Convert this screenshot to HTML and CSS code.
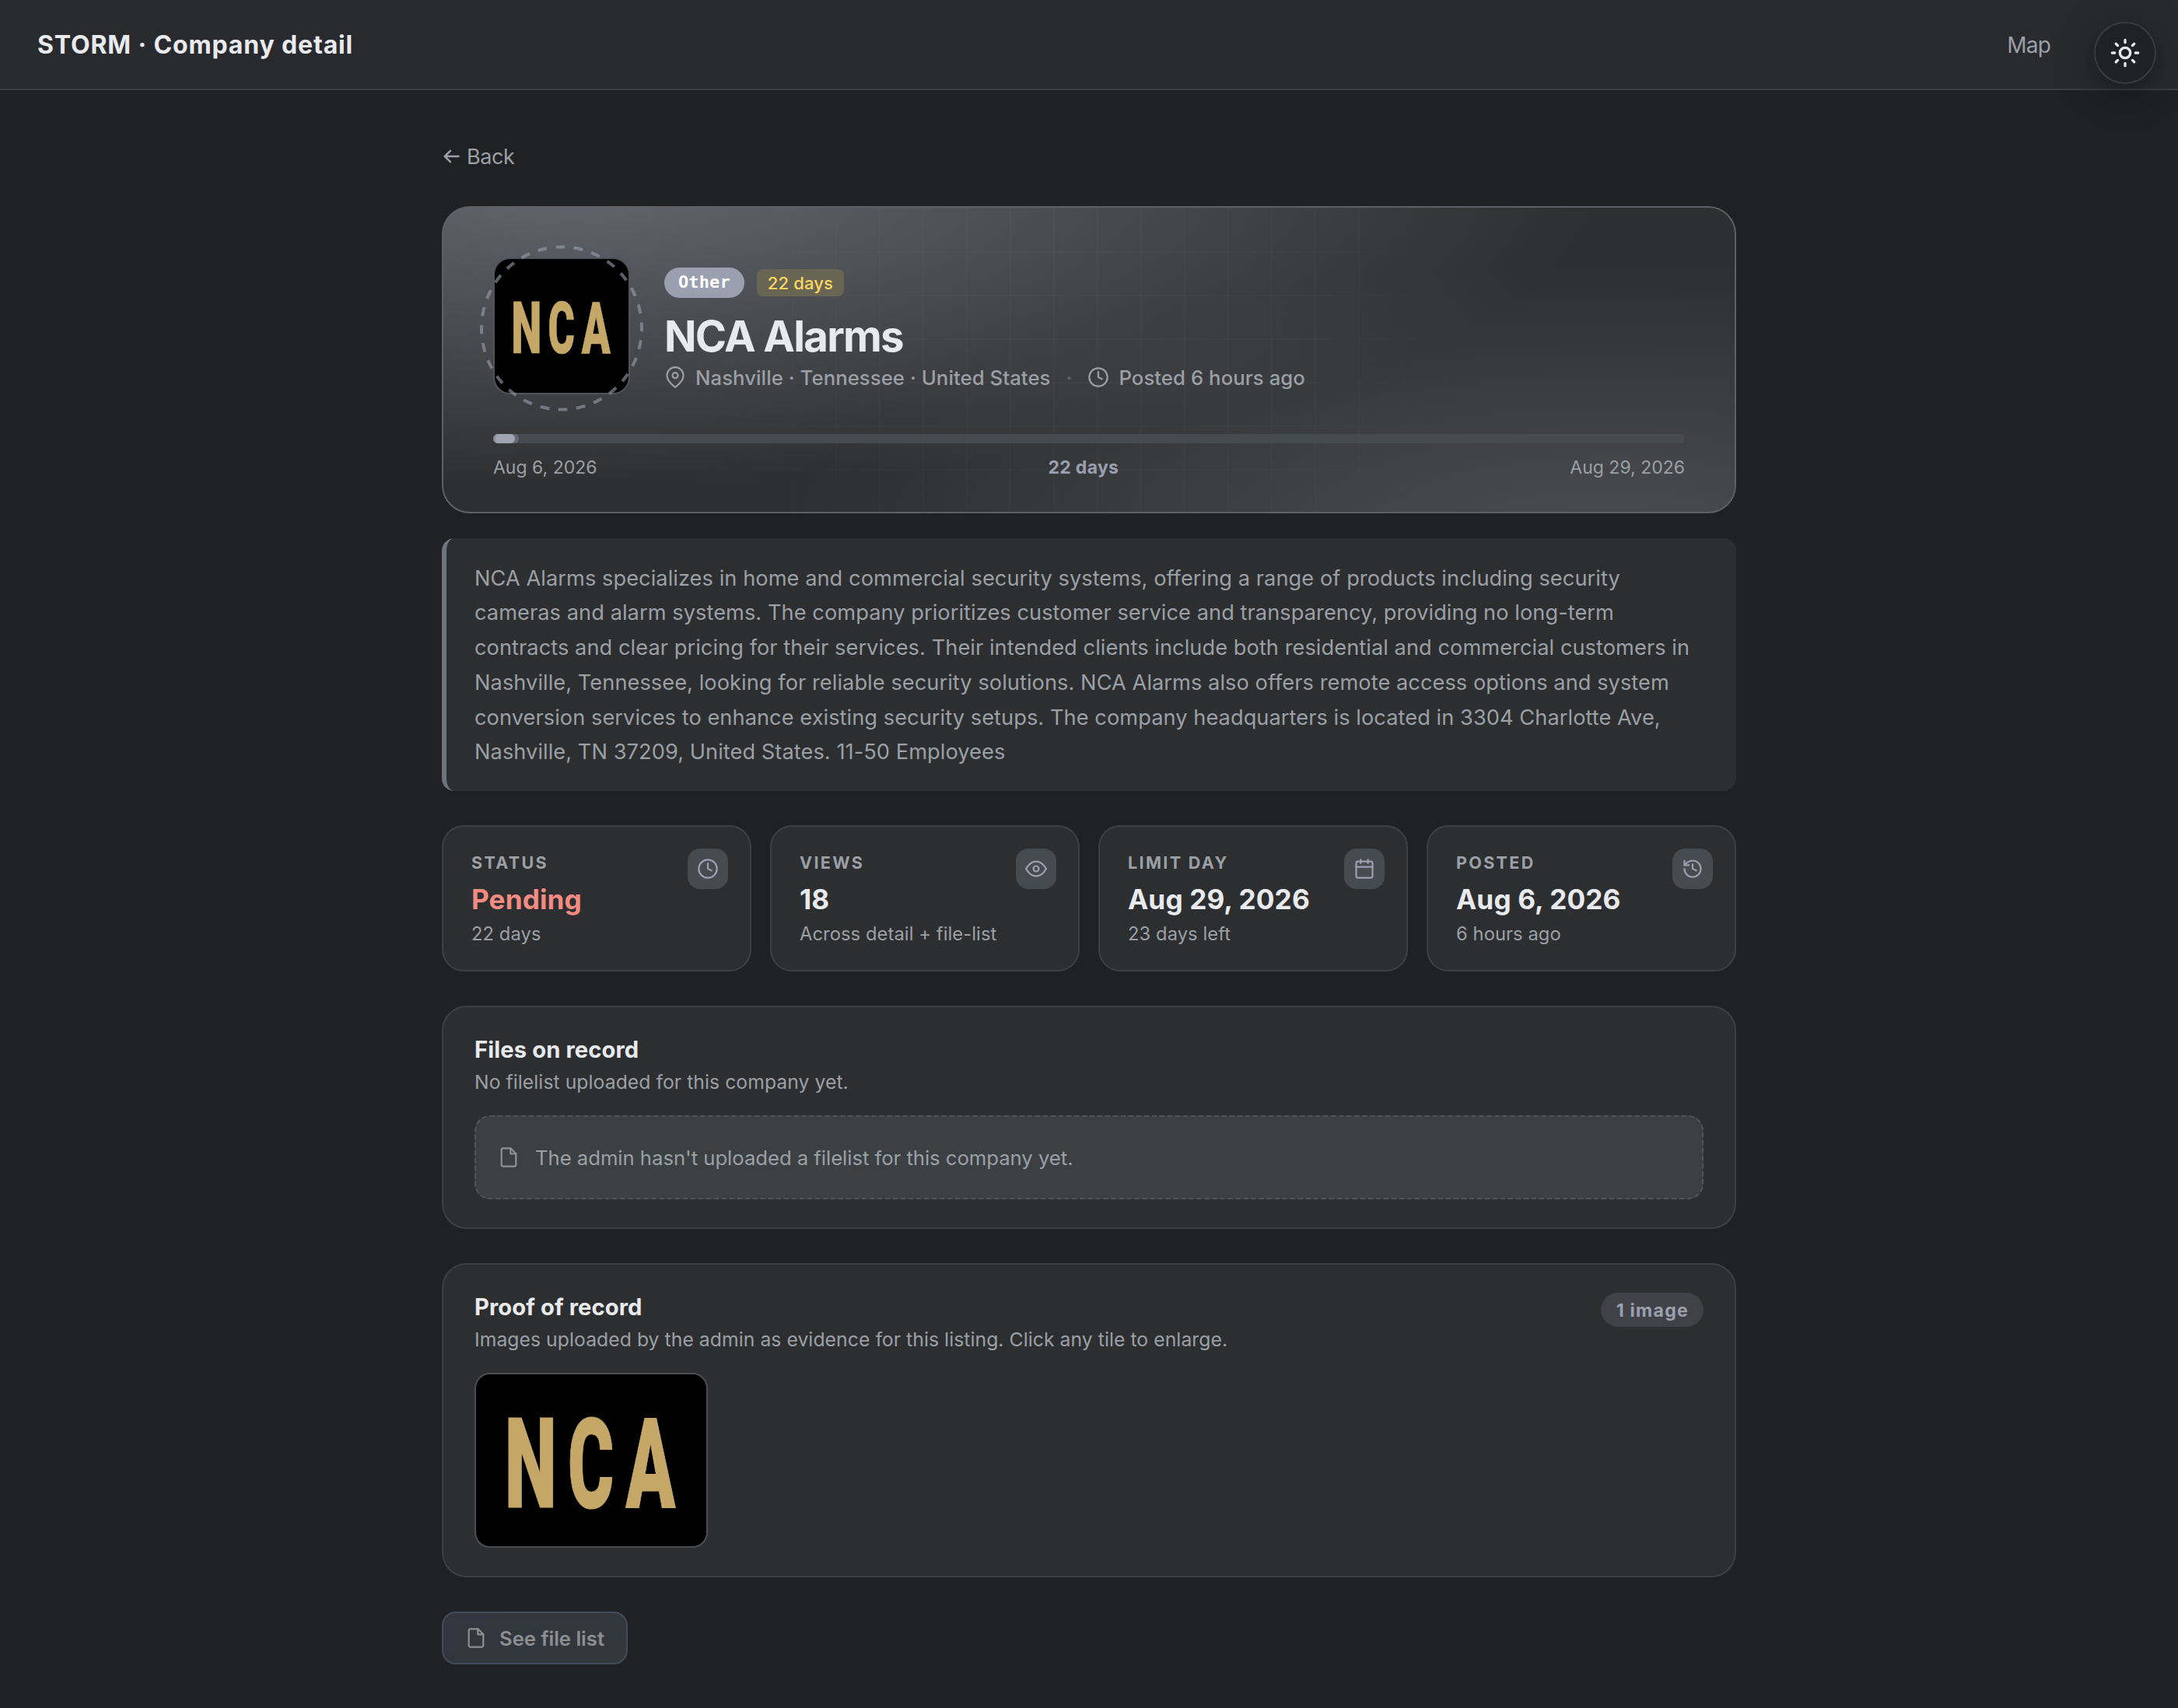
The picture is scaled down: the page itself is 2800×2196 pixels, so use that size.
FILE: index.html
```html
<!DOCTYPE html>
<html lang="en">
<head>
<meta charset="utf-8">
<title>STORM · Company detail</title>
<link rel="stylesheet" href="styles.css">
</head>
<body>
<svg class="defs" width="0" height="0" aria-hidden="true">
  <symbol id="i-clock" viewBox="0 0 24 24"><circle cx="12" cy="12" r="10"/><path d="M12 6v6l4 2"/></symbol>
  <symbol id="i-pin" viewBox="0 0 24 24"><path d="M21 10c0 7-9 13-9 13s-9-6-9-13a9 9 0 0 1 18 0z"/><circle cx="12" cy="10" r="3"/></symbol>
  <symbol id="i-eye" viewBox="0 0 24 24"><path d="M1 12s4-8 11-8 11 8 11 8-4 8-11 8-11-8-11-8z"/><circle cx="12" cy="12" r="3"/></symbol>
  <symbol id="i-calendar" viewBox="0 0 24 24"><rect x="3" y="4" width="18" height="18" rx="2"/><path d="M16 2v4M8 2v4M3 10h18"/></symbol>
  <symbol id="i-history" viewBox="0 0 24 24"><path d="M3 12a9 9 0 1 0 9-9 9.75 9.75 0 0 0-6.74 2.74L3 8"/><path d="M3 3v5h5M12 7v5l4 2"/></symbol>
  <symbol id="i-file" viewBox="0 0 24 24"><path d="M14 2H6a2 2 0 0 0-2 2v16a2 2 0 0 0 2 2h12a2 2 0 0 0 2-2V8z"/><path d="M14 2v6h6"/></symbol>
  <symbol id="i-sun" viewBox="0 0 24 24"><circle cx="12" cy="12" r="4"/><path d="M12 2v2M12 20v2M4.93 4.93l1.41 1.41M17.66 17.66l1.41 1.41M2 12h2M20 12h2M6.34 17.66l-1.41 1.41M19.07 4.93l-1.41 1.41"/></symbol>
</svg>

<header class="topbar">
  <div class="brand">STORM · Company detail</div>
  <a class="nav-link">Map</a>
</header>
<button class="theme-toggle"><svg class="icon"><use href="#i-sun"/></svg></button>

<main class="page">
  <a class="back"><svg class="back-arrow" viewBox="0 0 24 20"><path d="M21.5 10H4M11 2.8 3.8 10 11 17.2"/></svg>Back</a>

  <section class="hero">
    <div class="hero-main">
      <div class="logo-wrap">
        <svg class="logo nca" viewBox="0 0 172 172" preserveAspectRatio="xMidYMid slice">
          <text x="21.3" y="121.3" textLength="39" lengthAdjust="spacingAndGlyphs">N</text>
          <text x="68.6" y="121.3" textLength="34.4" lengthAdjust="spacingAndGlyphs">C</text>
          <text x="111.8" y="121.3" textLength="37" lengthAdjust="spacingAndGlyphs">A</text>
        </svg>
        <svg class="ring" viewBox="0 0 214 214"><ellipse cx="107" cy="107" rx="103" ry="104.6" pathLength="28" transform="rotate(2.3 107 107)"/></svg>
      </div>
      <div class="hero-text">
        <div class="pills"><span class="pill">Other</span><span class="days">22 days</span></div>
        <h1 class="title">NCA Alarms</h1>
        <div class="meta">
          <span class="meta-item"><svg class="icon"><use href="#i-pin"/></svg>Nashville · Tennessee · United States</span>
          <span class="dot">·</span>
          <span class="meta-item"><svg class="icon"><use href="#i-clock"/></svg>Posted 6 hours ago</span>
        </div>
      </div>
    </div>
    <div class="track"><div class="track-fill"><div class="track-dot"></div></div></div>
    <div class="dates"><span>Aug 6, 2026</span><b>22 days</b><span>Aug 29, 2026</span></div>
  </section>

  <p class="about">NCA Alarms specializes in home and commercial security systems, offering a range of products including security<br>cameras and alarm systems. The company prioritizes customer service and transparency, providing no long-term<br>contracts and clear pricing for their services. Their intended clients include both residential and commercial customers in<br>Nashville, Tennessee, looking for reliable security solutions. NCA Alarms also offers remote access options and system<br>conversion services to enhance existing security setups. The company headquarters is located in 3304 Charlotte Ave,<br>Nashville, TN 37209, United States. 11-50 Employees</p>

  <section class="stats">
    <div class="stat"><div><div class="label">STATUS</div><div class="value pending">Pending</div><div class="sub">22 days</div></div><span class="badge"><svg class="icon"><use href="#i-clock"/></svg></span></div>
    <div class="stat"><div><div class="label">VIEWS</div><div class="value">18</div><div class="sub">Across detail + file-list</div></div><span class="badge"><svg class="icon"><use href="#i-eye"/></svg></span></div>
    <div class="stat"><div><div class="label">LIMIT DAY</div><div class="value">Aug 29, 2026</div><div class="sub">23 days left</div></div><span class="badge"><svg class="icon"><use href="#i-calendar"/></svg></span></div>
    <div class="stat"><div><div class="label">POSTED</div><div class="value">Aug 6, 2026</div><div class="sub">6 hours ago</div></div><span class="badge"><svg class="icon"><use href="#i-history"/></svg></span></div>
  </section>

  <section class="card">
    <h2 class="card-title">Files on record</h2>
    <p class="card-sub">No filelist uploaded for this company yet.</p>
    <div class="empty"><svg class="icon"><use href="#i-file"/></svg>The admin hasn't uploaded a filelist for this company yet.</div>
  </section>

  <section class="card">
    <div class="card-head">
      <div>
        <h2 class="card-title">Proof of record</h2>
        <p class="card-sub">Images uploaded by the admin as evidence for this listing. Click any tile to enlarge.</p>
      </div>
      <span class="count">1 image</span>
    </div>
    <div class="thumb">
      <svg class="nca" viewBox="0 0 172 172" preserveAspectRatio="xMidYMid slice">
        <text x="21.3" y="121.3" textLength="39" lengthAdjust="spacingAndGlyphs">N</text>
        <text x="68.6" y="121.3" textLength="34.4" lengthAdjust="spacingAndGlyphs">C</text>
        <text x="111.8" y="121.3" textLength="37" lengthAdjust="spacingAndGlyphs">A</text>
      </svg>
    </div>
  </section>

  <button class="list-btn"><svg class="icon"><use href="#i-file"/></svg>See file list</button>
</main>
</body>
</html>
```
FILE: styles.css
```css
* { box-sizing: border-box; margin: 0; }

body {
  min-height: 2196px;
  background: #202124;
  color: #e8eaed;
  font-family: Inter, "Liberation Sans", sans-serif;
}

.defs { position: absolute; }
.icon {
  flex: none;
  width: 28px;
  height: 28px;
  fill: none;
  stroke: currentColor;
  stroke-width: 1.9;
  stroke-linecap: round;
  stroke-linejoin: round;
}

/* Top bar */
.topbar {
  display: flex;
  align-items: center;
  justify-content: space-between;
  height: 116px;
  padding: 0 164px 0 48px;
  background: #292a2d;
  border-bottom: 2px solid #3c3d41;
}
.brand { font-size: 32px; font-weight: 700; letter-spacing: 0.85px; }
.nav-link { font-size: 28px; letter-spacing: -0.8px; color: #9aa0a6; padding-top: 1px; }
.theme-toggle {
  position: absolute;
  top: 28px;
  right: 28px;
  display: flex;
  align-items: center;
  justify-content: center;
  width: 80px;
  height: 80px;
  padding: 0;
  border: 2px solid #3a3b3e;
  border-radius: 50%;
  background: #202124;
  color: #e8eaed;
  box-shadow: 0 12px 48px rgba(0, 0, 0, 0.38);
}
.theme-toggle .icon { width: 40px; height: 40px; stroke-width: 2; }

.page { width: 1664px; margin: 0 auto; padding-top: 65px; }

.back {
  display: flex;
  align-items: center;
  gap: 8px;
  height: 40px;
  margin-bottom: 44px;
  font-size: 27px;
  letter-spacing: -0.4px;
  color: #9aa0a6;
}
.back-arrow {
  width: 24px;
  height: 20px;
  fill: none;
  stroke: currentColor;
  stroke-width: 2.5;
  stroke-linecap: round;
  stroke-linejoin: round;
}

/* Hero */
.hero {
  position: relative;
  height: 395px;
  padding: 64px;
  overflow: hidden;
  border: 2px solid #5f6066;
  border-radius: 36px;
  background:
    radial-gradient(1320px 400px at 10% -10%, rgba(154, 160, 176, 0.5), transparent),
    radial-gradient(1050px 360px at 90% 110%, rgba(154, 160, 176, 0.27), transparent),
    #2e2f30;
  background-origin: border-box;
}
.hero::before {
  content: "";
  position: absolute;
  inset: 0;
  background:
    linear-gradient(rgba(255, 255, 255, 0.025) 2px, transparent 2px),
    linear-gradient(90deg, rgba(255, 255, 255, 0.025) 2px, transparent 2px);
  background-size: 56px 56px;
  mask-image: radial-gradient(580px 560px at 50% 40%, #000 20%, transparent);
}
.hero > * { position: relative; }
.hero-main { display: flex; gap: 44px; height: 176px; }
.logo-wrap { position: relative; width: 176px; height: 176px; }
.logo {
  display: block;
  width: 176px;
  height: 176px;
  border: 2px solid #505358;
  border-radius: 22px;
  background: #000;
}
.ring {
  position: absolute;
  left: -19px;
  top: -16px;
  width: 214px;
  height: 214px;
  fill: none;
  stroke: rgba(154, 160, 176, 0.6);
  stroke-width: 4;
  stroke-dasharray: 0.5 0.5;
  stroke-dashoffset: -0.5;
}
.nca { font: 900 93.3px Roboto, sans-serif; fill: #c5a767; stroke: #c5a767; stroke-width: 0.7; }

.hero-text { padding-top: 13px; }
.pills { display: flex; align-items: center; gap: 16px; height: 39px; }
.pill {
  height: 39px;
  padding: 0 18px;
  border-radius: 20px;
  background: #9aa0b0;
  color: #fff;
  font: 700 22px/37px "DejaVu Sans Mono", monospace;
  letter-spacing: 0.1px;
}
.days {
  height: 35px;
  padding: 0 14px;
  border-radius: 8px;
  background: #696553;
  color: #fdd663;
  font-size: 22px;
  font-weight: 500;
  line-height: 36px;
  letter-spacing: 0.15px;
}
.title {
  margin-top: 19px;
  font-size: 54.5px;
  line-height: 60px;
  font-weight: 700;
  letter-spacing: -1.7px;
}
.meta {
  display: flex;
  gap: 20px;
  margin-top: 8px;
  color: #9aa0a6;
  font-size: 25.7px;
  line-height: 32px;
  font-weight: 500;
  letter-spacing: 0.08px;
}
.meta-item { display: flex; align-items: center; gap: 12px; }
.meta-item .icon { margin-bottom: 2px; }
.dot { color: #5f6368; }

.track { height: 12px; margin-top: 51px; border-radius: 6px; background: #464b4f; }
.track-fill { width: 33px; height: 12px; border-radius: 6px; background: #666b73; }
.track-dot { width: 28px; height: 12px; border-radius: 6px; border-left: 3px solid #888d99; background: #9fa4b2; }
.dates {
  display: flex;
  justify-content: space-between;
  margin-top: 15px;
  color: #9aa0a6;
  font-size: 23px;
  line-height: 32px;
}
.dates b { color: #9aa0b0; letter-spacing: 0.3px; }

.about {
  height: 325px;
  margin-top: 32px;
  padding: 29.5px 36px 0;
  border-left: 6px solid #70747e;
  border-radius: 16px;
  background: #2d2e30;
  color: #9aa0a6;
  font-size: 27.2px;
  line-height: 44.8px;
  letter-spacing: 0.065px;
  white-space: nowrap;
}

/* Stats */
.stats { display: grid; grid-template-columns: repeat(4, 1fr); gap: 24px; margin-top: 44px; }
.stat {
  display: flex;
  justify-content: space-between;
  height: 188px;
  padding: 28px 28px 28px 36px;
  border: 2px solid #3f4043;
  border-radius: 28px;
  background: #2d2e30;
  white-space: nowrap;
}
.label {
  margin-top: 5px;
  color: #9aa0a6;
  font-size: 21.5px;
  line-height: 26px;
  font-weight: 700;
  letter-spacing: 2.35px;
}
.value { margin-top: 12px; font-size: 35.2px; line-height: 44px; font-weight: 700; letter-spacing: 0.1px; }
.value.pending { color: #f28b82; }
.sub { margin-top: 8px; color: #9aa0a6; font-size: 23.7px; line-height: 30px; letter-spacing: 0.1px; }
.badge {
  display: flex;
  align-items: center;
  justify-content: center;
  flex: none;
  width: 52px;
  height: 52px;
  margin-left: -52px;
  border-radius: 16px;
  background: #464b4f;
  color: #9aa0b0;
}

/* Cards */
.card {
  margin-top: 44px;
  padding: 37px 40px 36px;
  border: 2px solid #3f4043;
  border-radius: 32px;
  background: #2d2e30;
}
.card-head { display: flex; justify-content: space-between; align-items: flex-start; }
.card-title { font-size: 29.2px; line-height: 36px; font-weight: 700; letter-spacing: 0.1px; }
.card-sub { margin-top: 7px; color: #9aa0a6; font-size: 24.7px; line-height: 32px; letter-spacing: 0.07px; }
.empty {
  display: flex;
  align-items: center;
  gap: 20px;
  height: 108px;
  margin-top: 27px;
  padding: 0 28px;
  border: 2px dashed #515558;
  border-radius: 20px;
  background: #3c4043;
  color: #9aa0a6;
  font-size: 25.7px;
  letter-spacing: -0.04px;
}
.empty .icon { opacity: 0.85; }
.count {
  height: 44px;
  margin-top: -1px;
  padding: 0 19px 0 20px;
  border-radius: 22px;
  background: #414247;
  color: #9aa0ae;
  font-size: 23.2px;
  line-height: 46px;
  font-weight: 700;
  letter-spacing: 1.2px;
}
.thumb {
  width: 300px;
  height: 225px;
  margin-top: 27px;
  overflow: hidden;
  border: 2px solid #4b4e52;
  border-radius: 20px;
  background: #000;
}
.thumb svg { display: block; width: 296px; height: 221px; }

.list-btn {
  display: flex;
  align-items: center;
  gap: 16px;
  height: 68px;
  margin-top: 44px;
  padding: 0 28px;
  border: 2px solid #424b5a;
  border-radius: 18px;
  background: linear-gradient(135deg, #31363f, #33383b);
  color: #8c8e91;
  font: 600 25.7px Inter, sans-serif;
  letter-spacing: -0.04px;
}
```
